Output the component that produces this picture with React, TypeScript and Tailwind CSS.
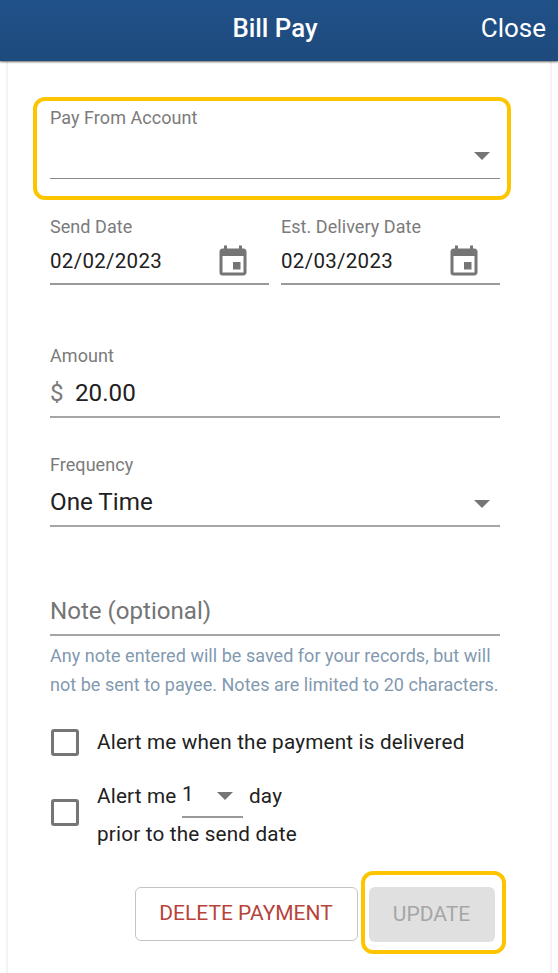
import type { ReactNode } from 'react'
import { MdEvent } from 'react-icons/md'

function Caret() {
  return (
    <svg viewBox="0 0 16 8" className="w-4 h-2 shrink-0 text-[#757575]" fill="currentColor">
      <path d="M0 0h16L8 8z" />
    </svg>
  )
}

function Label({ children }: { children: ReactNode }) {
  return <div className="h-6 text-[18px] leading-6 tracking-[0.05px] text-[#7b7b7b]">{children}</div>
}

function DateField({ label, value }: { label: string; value: string }) {
  return (
    <div className="w-[219px] h-[70px] border-b-2 border-[#999999]">
      <Label>{label}</Label>
      <div className="flex items-center justify-between h-11 pr-[18.5px]">
        <span className="text-[20.5px] tracking-[0.3px]">{value}</span>
        <MdEvent className="size-9 text-[#757575] mt-0.5" />
      </div>
    </div>
  )
}

function CheckBox() {
  return <span className="block w-7 h-[27px] shrink-0 rounded-[3px] border-[3px] border-[#757575]" />
}

export default function App() {
  return (
    <div className="h-[973px] flex flex-col overflow-hidden bg-white font-['Roboto',sans-serif] text-[#212121]">
      {/* Header */}
      <header className="relative z-10 grid grid-cols-[1fr_auto_1fr] items-center h-[61px] pr-3 pb-1.5 shrink-0 bg-linear-to-b from-[#205189] to-[#1e4a7d] text-white shadow-[0_1px_2px_rgba(0,0,0,0.6)]">
        <h1 className="col-start-2 ml-1 text-[25.8px] leading-8 font-medium">Bill Pay</h1>
        <button className="justify-self-end text-[26px] leading-8">Close</button>
      </header>

      <main className="flex-1 mx-1.5 border-x-2 border-[#f3f3f3] px-[25px] pt-9">
        {/* Pay from */}
        <section className="w-[478px] h-[103px] rounded-xl border-4 border-[#fdc500] px-[13px] pt-[5px]">
          <Label>Pay From Account</Label>
          <div className="flex items-center justify-end h-[49px] w-[450px] border-b border-[#8a8a8a] pr-2.5 pt-1">
            <Caret />
          </div>
        </section>

        <div className="w-[450px] ml-[17px]">
          {/* Dates */}
          <section className="flex justify-between mt-[15px]">
            <DateField label="Send Date" value="02/02/2023" />
            <DateField label="Est. Delivery Date" value="02/03/2023" />
          </section>

          {/* Amount */}
          <section className="mt-[59px] h-[74px] border-b-2 border-[#a6a6a6]">
            <Label>Amount</Label>
            <div className="flex pt-[9px] text-[24.2px] leading-8">
              <span className="w-[25px] text-[#7b7b7b]">$</span>
              <span>20.00</span>
            </div>
          </section>

          {/* Frequency */}
          <section className="mt-[35px] h-[74px] border-b-2 border-[#a6a6a6]">
            <Label>Frequency</Label>
            <div className="flex items-center justify-between pt-[9px] pr-2.5 text-[24.2px] leading-8">
              <span>One Time</span>
              <span className="pt-[3px]">
                <Caret />
              </span>
            </div>
          </section>

          {/* Note */}
          <section>
            <div className="mt-[68px] h-[41px] border-b-2 border-[#a6a6a6] text-[24.1px] leading-8 text-[#757575]">Note (optional)</div>
            <p className="mt-[5px] text-[18px] leading-[29px] tracking-[0.035px] text-[#8299b0] whitespace-nowrap">
              Any note entered will be saved for your records, but will
              <br />
              not be sent to payee. Notes are limited to 20 characters.
            </p>
          </section>

          {/* Alerts */}
          <section className="ml-px mt-[30px] text-[20.7px] leading-7 tracking-[0.18px]">
            <div className="flex h-7 gap-[18px]">
              <CheckBox />
              <span className="-mt-px">Alert me when the payment is delivered</span>
            </div>
            <div className="flex gap-[18px] mt-6">
              <div className="mt-[18px]">
                <CheckBox />
              </div>
              <div>
                <div className="flex h-[38px]">
                  <span className="w-[85px] pt-px">Alert me</span>
                  <span className="flex items-center justify-between w-[61px] h-[37px] pr-2.5 pb-1.5 mr-1.5 border-b-2 border-[#999999]">
                    <span className="pb-[3px]">1</span>
                    <Caret />
                  </span>
                  <span className="pt-px">day</span>
                </div>
                <div className="pt-px">prior to the send date</div>
              </div>
            </div>
          </section>
        </div>

        {/* Actions */}
        <div className="flex justify-end gap-[3px] w-[473px] mt-[23px] text-[21px]">
          <button className="w-[223px] h-[54px] mt-4 pr-px rounded-md border-[1.5px] border-[#c4c4c4] text-[#b8433b]">DELETE PAYMENT</button>
          <div className="w-[145px] h-[83px] rounded-xl border-4 border-[#fdc500] pl-1 pt-3">
            <button className="w-[126px] h-[55px] pr-px rounded-md bg-[#e0e0e0] text-[#a6a6a6]">UPDATE</button>
          </div>
        </div>
      </main>
    </div>
  )
}
